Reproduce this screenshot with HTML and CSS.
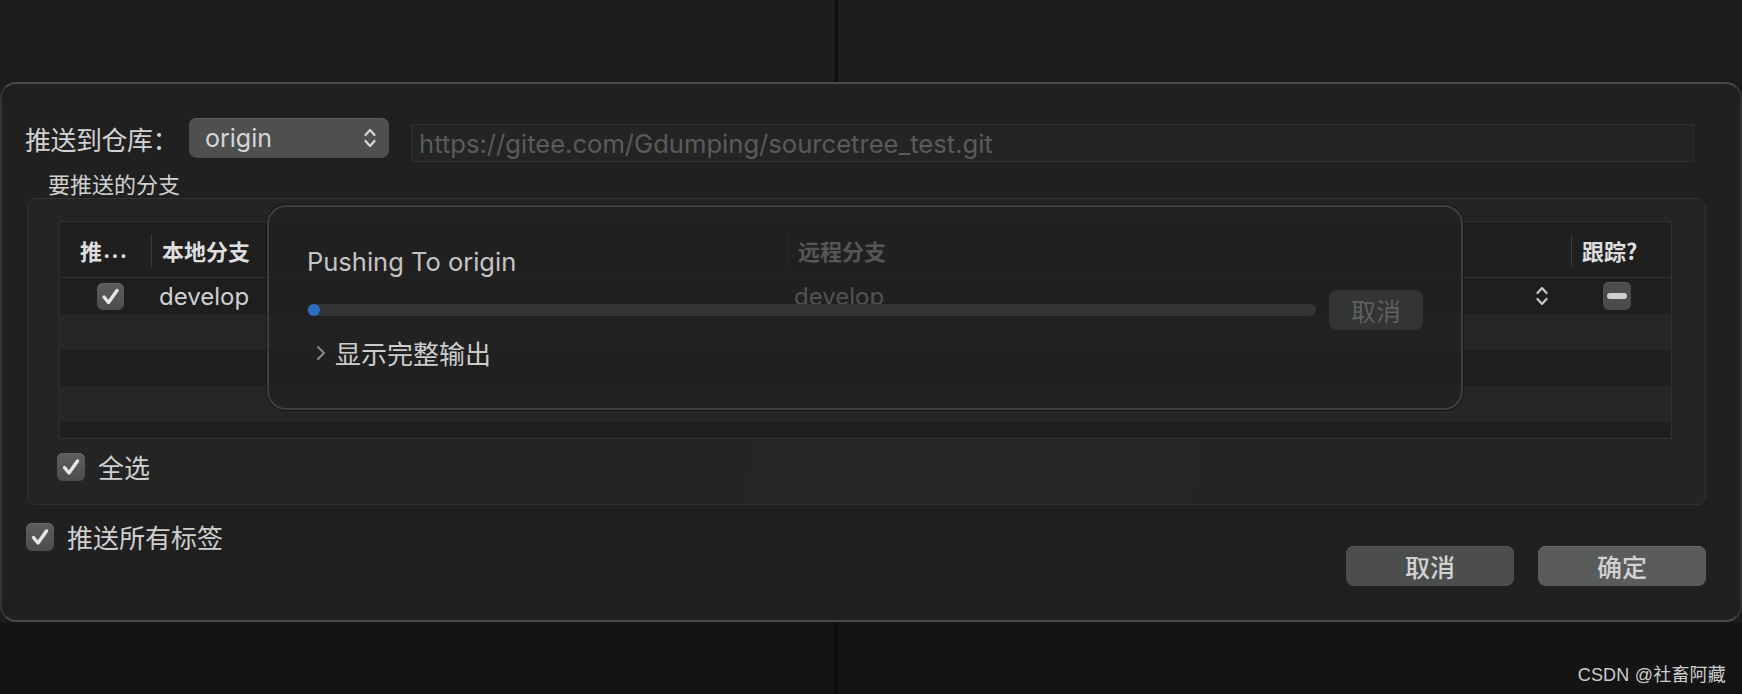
FILE: index.html
```html
<!DOCTYPE html>
<html lang="zh-CN">

<head>
    <meta charset="UTF-8">
    <meta name="viewport" content="width=device-width, initial-scale=1.0">
    <title>推送</title>
    <link rel="stylesheet" href="styles.css">
</head>

<body>
    <div class="desk desk-top"></div>

    <div class="dialog">
        <div class="repo-row">
            <span class="repo-label">推送到仓库：</span>
            <div class="popup">
                <span class="popup-text">origin</span>
                <svg class="popup-arrows" width="14" height="26" viewBox="0 0 14 26">
                    <path d="M2.5 10 L7 5 L11.5 10 M2.5 16 L7 21 L11.5 16" fill="none" stroke="#d8d8d8" stroke-width="2.2" stroke-linecap="round" stroke-linejoin="round"/>
                </svg>
            </div>
            <div class="url-field">https://gitee.com/Gdumping/sourcetree_test.git</div>
        </div>

        <div class="group-title">要推送的分支</div>

        <div class="group">
            <div class="branch-table">
                <div class="table-head">
                    <div class="cell head-cell col-push">推<span class="dots">...</span></div>
                    <div class="cell head-cell col-local"><span class="divider"></span>本地分支</div>
                    <div class="cell head-cell col-remote"><span class="divider"></span>远程分支</div>
                    <div class="cell head-cell col-track-head"><span class="divider"></span>跟踪?</div>
                </div>
                <div class="table-row">
                    <div class="cell col-push center">
                        <span class="check small">
                            <svg width="27" height="27" viewBox="0 0 27 27"><path d="M7 14 L11.5 19.5 L20 7.5" fill="none" stroke="#e6e6e6" stroke-width="3.4" stroke-linecap="round" stroke-linejoin="round"/></svg>
                        </span>
                    </div>
                    <div class="cell col-local latin">develop</div>
                    <div class="cell col-remote latin">
                        <span class="remote-name">develop</span>
                        <svg class="row-arrows" width="14" height="28" viewBox="0 0 14 28">
                            <path d="M2.5 11 L7 6 L11.5 11 M2.5 17 L7 22 L11.5 17" fill="none" stroke="#c8c8c8" stroke-width="2.2" stroke-linecap="round" stroke-linejoin="round"/>
                        </svg>
                    </div>
                    <div class="cell col-track">
                        <span class="minus-btn"><span class="minus-bar"></span></span>
                    </div>
                </div>
                <div class="table-row alt"></div>
                <div class="table-row"></div>
                <div class="table-row alt"></div>
                <div class="table-row"></div>
            </div>

            <label class="check-row select-all">
                <span class="check">
                    <svg width="28" height="28" viewBox="0 0 28 28"><path d="M7.5 14.5 L12 20 L20.5 8" fill="none" stroke="#e6e6e6" stroke-width="3.4" stroke-linecap="round" stroke-linejoin="round"/></svg>
                </span>
                <span class="check-label">全选</span>
            </label>
        </div>

        <div class="bottom-row">
            <label class="check-row push-tags">
                <span class="check">
                    <svg width="28" height="28" viewBox="0 0 28 28"><path d="M7.5 14.5 L12 20 L20.5 8" fill="none" stroke="#e6e6e6" stroke-width="3.4" stroke-linecap="round" stroke-linejoin="round"/></svg>
                </span>
                <span class="check-label">推送所有标签</span>
            </label>
            <div class="buttons">
                <button class="btn">取消</button>
                <button class="btn primary">确定</button>
            </div>
        </div>

        <div class="progress-sheet">
            <div class="sheet-title">Pushing To origin</div>
            <div class="progress-row">
                <div class="progress-track"><span class="progress-dot"></span></div>
                <button class="sheet-cancel">取消</button>
            </div>
            <div class="disclosure">
                <svg width="12" height="18" viewBox="0 0 12 18"><path d="M3 3 L9 9 L3 15" fill="none" stroke="#8a8a8a" stroke-width="2" stroke-linecap="round" stroke-linejoin="round"/></svg>
                <span>显示完整输出</span>
            </div>
        </div>
    </div>

    <div class="desk desk-bottom">
        <span class="watermark">CSDN @社畜阿藏</span>
    </div>
</body>

</html>
```

FILE: styles.css
```css
body {
    margin: 0;
    width: 1742px;
    height: 694px;
    overflow: hidden;
    background-color: #1c1c1c;
    font-family: "Noto Sans CJK SC", sans-serif;
    color: #cfcfcf;
}

.desk {
    background-image: linear-gradient(to right, transparent 835px, #0e0e0e 835px, #0e0e0e 838px, transparent 838px);
}

.desk-top {
    height: 82px;
    background-color: #1c1c1c;
}

.desk-bottom {
    height: 72px;
    background-color: #141414;
    display: flex;
    justify-content: flex-end;
    align-items: flex-end;
    padding: 0 16px 8px 0;
    box-sizing: border-box;
}

.watermark {
    font-family: "Liberation Sans", "Noto Sans CJK SC", sans-serif;
    font-size: 18px;
    color: #cdcdcd;
    letter-spacing: 0.2px;
}

/* dialog */

.dialog {
    position: relative;
    height: 540px;
    box-sizing: border-box;
    background-color: #202020;
    border: 2px solid #4a4a4a;
    border-left-color: #333;
    border-right-color: #333;
    border-radius: 16px;
    padding-top: 34px;
}

.repo-row {
    display: flex;
    align-items: center;
    height: 40px;
    padding: 0 46px 0 23px;
}

.repo-label {
    font-size: 26px;
    width: 164px;
    letter-spacing: -0.5px;
    color: #d2d2d2;
}

.popup {
    display: flex;
    align-items: center;
    justify-content: space-between;
    width: 200px;
    height: 40px;
    box-sizing: border-box;
    padding: 0 12px 0 16px;
    background-color: #4e4f4f;
    border-radius: 8px;
    box-shadow: inset 0 1px 0 #5c5c5c;
}

.popup-text {
    font-family: Inter, sans-serif;
    font-size: 25px;
    color: #d6d6d6;
}

.url-field {
    flex: 1;
    align-self: flex-start;
    margin: 6px 0 0 22px;
    height: 38px;
    box-sizing: border-box;
    padding: 0 7px;
    background-color: #232524;
    border: 1px solid #2e302f;
    font-family: Inter, sans-serif;
    font-size: 25.6px;
    line-height: 37px;
    color: #5a5b5a;
}

.group-title {
    margin: 13px 0 0 46px;
    font-size: 22px;
    line-height: 24px;
    color: #d0d0d0;
}

.group {
    margin: 3px 0 0 25px;
    width: 1679px;
    height: 307px;
    box-sizing: border-box;
    padding: 22px 0 0 31px;
    background: linear-gradient(100deg, #232423, #242625 60%, #232524);
    border: 1px solid #313332;
    border-radius: 9px;
}

/* branch table */

.branch-table {
    width: 1613px;
    height: 218px;
    box-sizing: border-box;
    border: 1px solid #303231;
    background-color: #1e1e1e;
    overflow: hidden;
}

.table-head,
.table-row {
    display: grid;
    grid-template-columns: 91px 636px 784px 1fr;
}

.table-head {
    height: 55px;
    border-bottom: 1px solid #323433;
    background-color: #1f1f1f;
}

.table-row {
    height: 36px;
    background-color: #1e1e1e;
}

.table-row.alt {
    background-color: #252726;
}

.cell {
    position: relative;
    display: flex;
    align-items: center;
    font-size: 22px;
}

.head-cell {
    font-weight: 700;
    color: #dedede;
    padding-left: 11px;
}

.col-push.head-cell {
    padding-left: 20px;
}

.dots {
    font-family: Inter, sans-serif;
    font-weight: 700;
    letter-spacing: 1px;
    margin-left: 1px;
}

.divider {
    position: absolute;
    left: 0;
    top: 12px;
    width: 1px;
    height: 33px;
    background-color: #3a3a3a;
}

.center {
    justify-content: center;
    padding-left: 9px;
}

.latin {
    font-family: Inter, sans-serif;
    font-size: 24px;
    color: #d0d0d0;
}

.col-local.latin {
    padding-left: 8px;
}

.col-remote.latin {
    justify-content: space-between;
    padding: 0 22px 0 7px;
}

.row-arrows {
    display: block;
}

.col-track {
    justify-content: center;
    padding-right: 8px;
}

.minus-btn {
    display: flex;
    align-items: center;
    justify-content: center;
    width: 28px;
    height: 28px;
    border-radius: 6px;
    background-color: #4b4c4c;
    box-shadow: inset 0 1px 0 #5a5a5a;
}

.minus-bar {
    width: 20px;
    height: 6px;
    border-radius: 3px;
    background-color: #cfcfcf;
}

/* checkboxes */

.check-row {
    display: flex;
    align-items: center;
    gap: 13px;
}

.check {
    display: flex;
    width: 28px;
    height: 28px;
    border-radius: 6px;
    background: linear-gradient(#5c5d5d, #4c4d4d);
    box-shadow: inset 0 1px 0 #666;
}

.check.small {
    width: 27px;
    height: 27px;
}

.check-label {
    font-size: 26px;
    line-height: 36px;
    color: #cfcfcf;
}

.select-all {
    margin: 10px 0 0 -2px;
}

.bottom-row {
    display: flex;
    justify-content: space-between;
    align-items: flex-start;
    padding: 0 34px 0 24px;
}

.push-tags {
    margin-top: 14px;
}

.buttons {
    display: flex;
    gap: 24px;
    margin-top: 41px;
}

.btn {
    width: 168px;
    height: 40px;
    border: none;
    border-radius: 8px;
    background-color: #4c4e4d;
    box-shadow: inset 0 1px 0 #595b5a;
    font-family: "Noto Sans CJK SC", sans-serif;
    font-size: 25px;
    font-weight: 500;
    color: #d2d2d2;
    padding: 0;
}

.btn.primary {
    background-color: #5a5c5b;
    box-shadow: inset 0 1px 0 #686a69;
}

/* progress sheet on top of the dialog */

.progress-sheet {
    position: absolute;
    top: 121px;
    left: 265px;
    width: 1196px;
    height: 205px;
    box-sizing: border-box;
    padding: 39px 38px 0 38px;
    background-color: rgba(33, 33, 33, 0.72);
    border: 2px solid #3e3f3f;
    border-radius: 19px;
    box-shadow: 0 0 0 1px #151515;
}

.sheet-title {
    font-family: Inter, sans-serif;
    font-size: 25.5px;
    line-height: 32px;
    color: #c4c4c4;
}

.progress-row {
    display: flex;
    align-items: center;
    gap: 13px;
    margin-top: 12px;
}

.progress-track {
    flex: 1;
    position: relative;
    height: 12px;
    border-radius: 6px;
    background-color: #333434;
}

.progress-dot {
    position: absolute;
    left: 1px;
    top: 0;
    width: 12px;
    height: 12px;
    border-radius: 50%;
    background-color: #2b6cc4;
}

.sheet-cancel {
    width: 94px;
    height: 40px;
    border: none;
    border-radius: 8px;
    background-color: #333434;
    font-family: "Noto Sans CJK SC", sans-serif;
    font-size: 25px;
    color: #5e5f5f;
    padding: 0;
}

.disclosure {
    display: flex;
    align-items: center;
    gap: 8px;
    margin: 4px 0 0 8px;
    font-size: 26px;
    color: #cccccc;
}
```
